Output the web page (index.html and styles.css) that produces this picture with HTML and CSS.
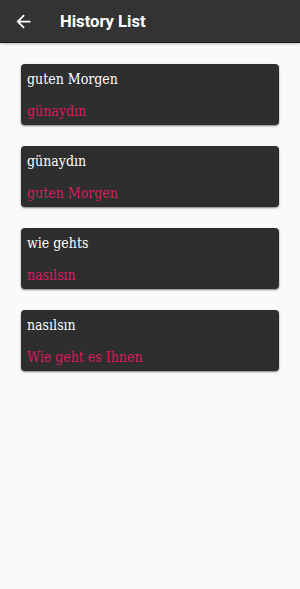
FILE: index.html
```html
<!DOCTYPE html>
<html lang="en">
<head>
    <meta charset="UTF-8">
    <meta name="viewport" content="width=device-width, initial-scale=1.0">
    <title>History List</title>
    <link rel="stylesheet" href="styles.css">
</head>
<body>
    <div class="toolbar">
        <svg class="back" width="21" height="21" viewBox="0 0 24 24">
            <path d="M20 11H7.83l5.59-5.59L12 4l-8 8 8 8 1.41-1.41L7.83 13H20v-2z" fill="#fff"/>
        </svg>
        <h1>History List</h1>
    </div>

    <!-- history entries -->
    <div class="list">
        <div class="item">
            <div class="source">guten Morgen</div>
            <div class="target">günaydın</div>
        </div>
        <div class="item">
            <div class="source">günaydın</div>
            <div class="target">guten Morgen</div>
        </div>
        <div class="item">
            <div class="source">wie gehts</div>
            <div class="target">nasılsın</div>
        </div>
        <div class="item">
            <div class="source">nasılsın</div>
            <div class="target">Wie geht es Ihnen</div>
        </div>
    </div>
</body>
</html>
```

FILE: styles.css
```css
body {
    margin: 0;
    padding: 0;
    background-color: #fafafa;
    font-family: Roboto, "Noto Sans", sans-serif;
}

.toolbar {
    height: 42px;
    background-color: #333333;
    border-bottom: 1px solid #1a1a1a;
    box-shadow: 0 1px 3px rgba(0, 0, 0, 0.25);
    display: flex;
    align-items: center;
    padding-left: 13px;
}

.back {
    display: block;
}

.toolbar h1 {
    margin: 0 0 0 26px;
    color: #ffffff;
    font-size: 16.6px;
    font-weight: 700;
}

.list {
    padding: 21px 21px;
    display: flex;
    flex-direction: column;
    gap: 21px;
}

.item {
    background-color: #2e2e2e;
    border-radius: 4px;
    box-shadow: 0 1px 2px rgba(0, 0, 0, 0.5);
    height: 61px;
    box-sizing: border-box;
    padding: 5px 6px;
    font-family: "DejaVu Serif Condensed", "DejaVu Serif", serif;
    font-stretch: condensed;
    font-size: 14px;
}

.source {
    color: #ffffff;
    line-height: 20px;
}

.target {
    color: #d81b60;
    line-height: 20px;
    margin-top: 12px;
}
```
